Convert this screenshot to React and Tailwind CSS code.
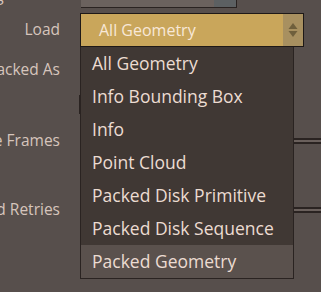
import React from "react";

const items = [
  "All Geometry",
  "Info Bounding Box",
  "Info",
  "Point Cloud",
  "Packed Disk Primitive",
  "Packed Disk Sequence",
  "Packed Geometry",
];

// little up/down arrows on the combo box
const UpDown = () => (
  <svg width="12" height="16" viewBox="0 0 12 16" fill="none">
    <path d="M6 1L10.5 7H1.5Z" fill="#6f5f3c" />
    <path d="M6 15L10.5 9H1.5Z" fill="#6f5f3c" />
  </svg>
);

const Label = ({ children }) => (
  <div className="w-[80px] shrink-0 flex justify-end pr-[20px] overflow-hidden whitespace-nowrap text-[15.5px] text-[#d6c5bc]">
    {children}
  </div>
);

// slider groove peeking out on the right of the menu
const Groove = () => (
  <div className="flex-1 flex flex-col">
    <div className="h-[2px] bg-[#2a2321]" />
    <div className="h-[2px] bg-[#6a605c]" />
    <div className="h-[2px] bg-[#2a2321]" />
  </div>
);

export default function App() {
  return (
    <div className="relative w-[321px] h-[292px] overflow-hidden bg-[#574f4c] font-['Open_Sans',sans-serif] text-[16px]">
      <div className="flex flex-col">
        {/* top row, mostly scrolled out of view */}
        <div className="flex h-[8px] items-end">
          <div className="w-[81px] shrink-0 relative h-full overflow-hidden">
            <span className="absolute -left-[5px] -top-[13px] leading-none text-[#d6c5bc]">g</span>
          </div>
          <div className="flex h-full w-[156px] border-b border-r border-[#2a2321]">
            <div className="flex-1 bg-[#6b625e]" />
            <div className="w-[22px] bg-[#5c6062]" />
          </div>
        </div>

        {/* Load */}
        <div className="flex h-[34px] mt-[5px] items-center">
          <Label>Load</Label>
          <div className="flex h-full w-[224px] border border-[#1e1917] bg-[#c9a65b]">
            <div className="flex-1 flex items-center pl-[18px] text-[16px] text-[#f8e8d8]">All Geometry</div>
            <div className="w-[20px] flex items-center justify-center bg-[#a89060]">
              <UpDown />
            </div>
          </div>
        </div>

        {/* Packed As */}
        <div className="flex h-[34px] mt-[6px] items-center">
          <Label>Unpacked As</Label>
        </div>

        {/* checkbox row */}
        <div className="flex h-[35px] items-center">
          <div className="w-[79px] shrink-0" />
          <div className="w-[19px] h-[19px] border-l border-[#2a2321]" />
        </div>

        {/* Frames */}
        <div className="flex h-[37px] items-center">
          <Label>Cache Frames</Label>
          <div className="w-[213px] shrink-0" />
          <Groove />
        </div>

        <div className="h-[35px]" />

        {/* Retries */}
        <div className="flex h-[32px] items-center">
          <Label>Failed Retries</Label>
          <div className="w-[213px] shrink-0" />
          <Groove />
        </div>
      </div>

      {/* open dropdown menu */}
      <div className="absolute left-[80px] top-[47px] w-[214px] flex flex-col bg-[#403834] border-x border-b border-[#2a2321]">
        {items.map((it, i) => (
          <div
            key={it}
            className={
              "h-[33px] flex items-center pl-[11px] text-[17.5px] whitespace-nowrap text-[#ecdcd2] " +
              (i === items.length - 1 ? "bg-[#5a514d]" : "")
            }
          >
            {it}
          </div>
        ))}
      </div>
    </div>
  );
}
